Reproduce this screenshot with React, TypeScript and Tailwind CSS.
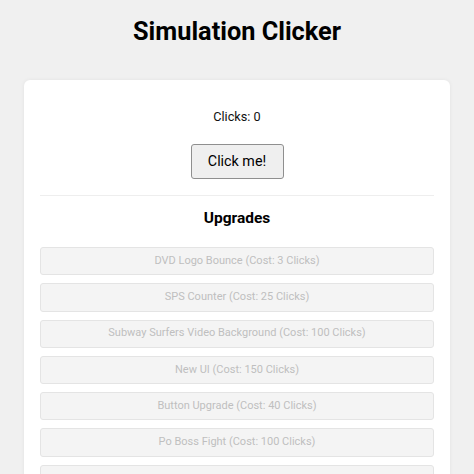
const UPGRADES = [
  { name: 'DVD Logo Bounce', cost: 3 },
  { name: 'SPS Counter', cost: 25 },
  { name: 'Subway Surfers Video Background', cost: 100 },
  { name: 'New UI', cost: 150 },
  { name: 'Button Upgrade', cost: 40 },
  { name: 'Po Boss Fight', cost: 100 },
];

export default function App() {
  const clicks = 0;

  return (
    <div className="min-h-screen bg-[#f0f0f0] px-6 pt-[14px] font-['Roboto',sans-serif] text-[#111]">
      <h1 className="text-center text-[25.3px] font-bold leading-[36px] text-black">Simulation Clicker</h1>

      <div className="mt-[30px] rounded-md bg-white px-4 pt-[28px] pb-4 shadow-[0_0_4px_rgba(0,0,0,0.06)]">
        <p className="text-center text-[12.7px] leading-[18px]">Clicks: {clicks}</p>

        <div className="mt-[18px] flex justify-center">
          <button className="h-[35px] w-[93px] rounded-[3px] border border-[#8f8f8f] bg-[#efefef] text-[14.3px] text-black">
            Click me!
          </button>
        </div>

        <hr className="mt-4 border-t border-[#eeeeee]" />

        <h3 className="mt-[12px] text-center text-[15.5px] font-bold leading-[20px] text-black">Upgrades</h3>

        <div className="mt-[19px] flex flex-col gap-2">
          {UPGRADES.map((u) => (
            <button
              key={u.name}
              disabled
              className="h-[28.3px] w-full rounded-[3px] border border-[#e4e4e4] bg-[#f4f4f4] text-[11px] text-[#bfbfbf]"
            >
              {u.name} (Cost: {u.cost} Clicks)
            </button>
          ))}
          {/* next upgrade, only its top edge shows above the fold */}
          <button
            disabled
            aria-label="more upgrades"
            className="h-[28.3px] w-full rounded-[3px] border border-[#e4e4e4] bg-[#f4f4f4]"
          />
        </div>
      </div>
    </div>
  );
}
